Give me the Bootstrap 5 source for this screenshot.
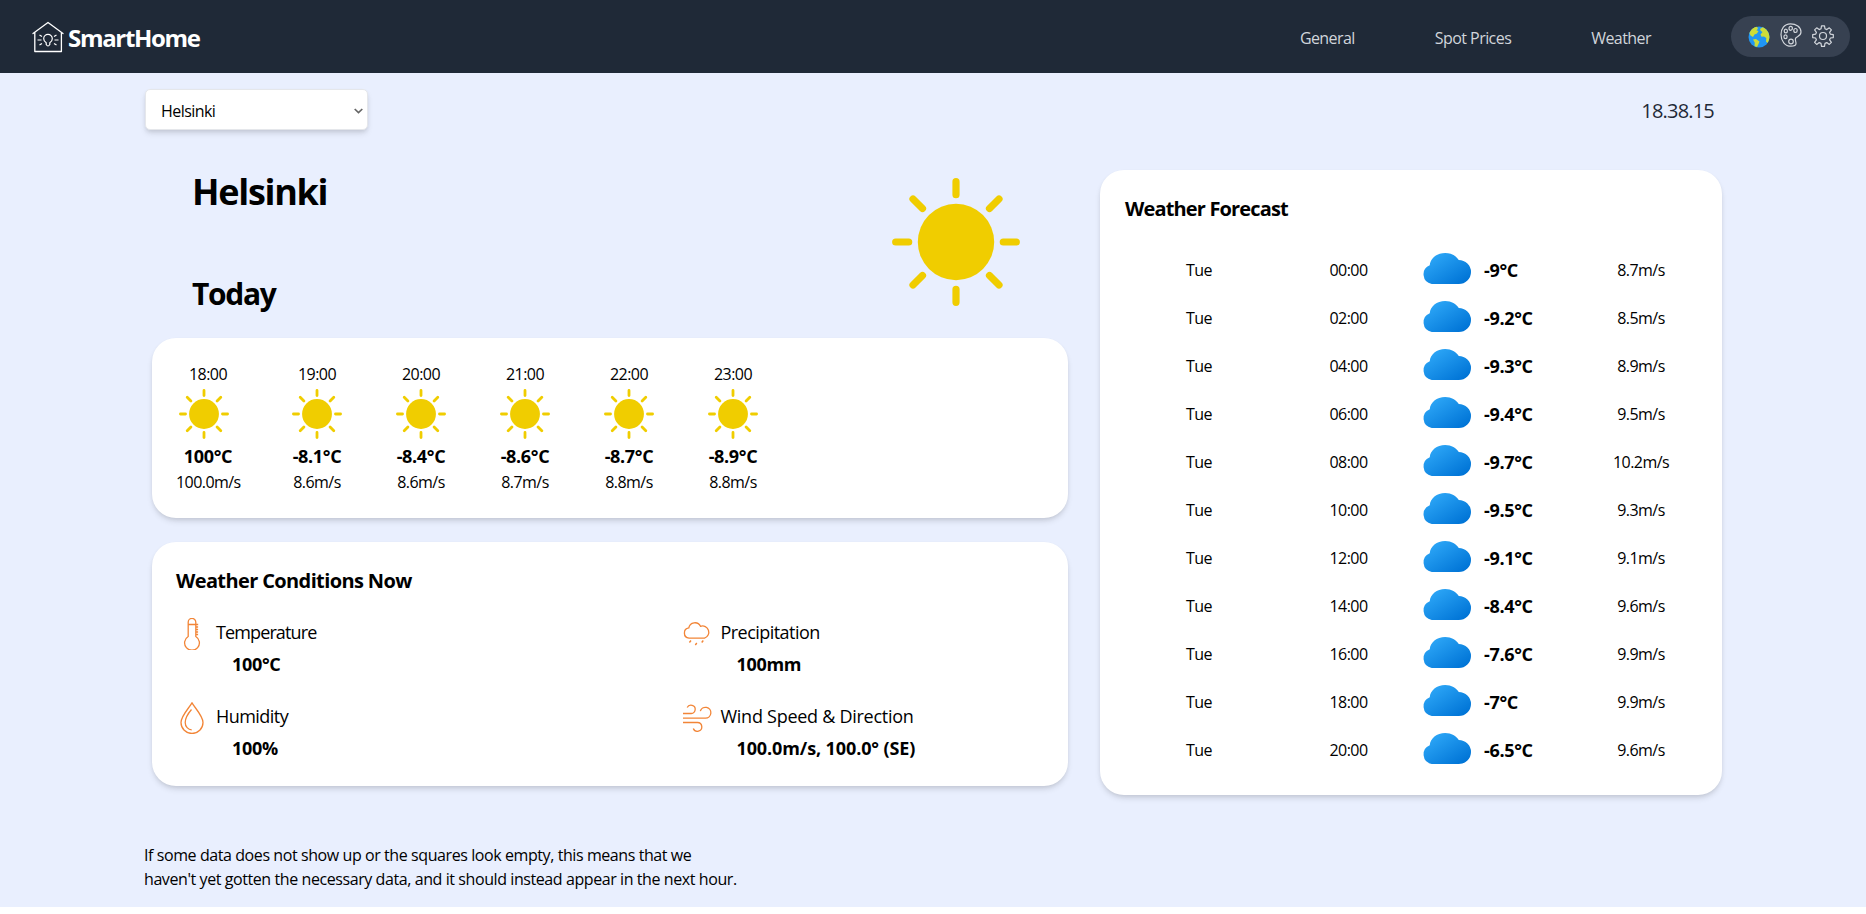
<!DOCTYPE html>
<html lang="en">
<head>
<meta charset="utf-8">
<meta name="viewport" content="width=device-width, initial-scale=1">
<title>SmartHome</title>
<link href="https://cdn.jsdelivr.net/npm/bootstrap@5.3.0/dist/css/bootstrap.min.css" rel="stylesheet">
<style>
  body { font-family: "Segoe UI", "Open Sans", "Noto Sans", sans-serif; font-size: 16px; line-height: 24px; letter-spacing: -.035em; color: #000; background: #fff; overflow-x: hidden; }
  svg { display: block; flex: none; }
  .topbar { height: 73px; background: #1f2937; padding: 0 16px 0 32px; }
  .brand { font-size: 24px; font-weight: 700; letter-spacing: -.055em; color: #fff; gap: 4px; }
  .brand span { padding-top: 2px; }
  .menu { gap: 80px; }
  .menu a { color: #d1d5db; text-decoration: none; padding-top: 2px; }
  .tools { height: 41px; width: 119px; background: #374151; padding: 0 16px 0 17px; }
  .tools .gear { margin-bottom: 2px; }
  .page { background: #e9effe; height: 834px; padding: 16px 144px; }
  .city { width: 223px; height: 41px; margin-left: 1px; padding: 2px 4px 0 15px; border: 1px solid #e5e7eb; border-radius: 5px; background: #fff; box-shadow: 0 4px 6px -1px rgba(0,0,0,.12), 0 2px 4px -1px rgba(0,0,0,.08); }
  .clock { font-size: 20px; color: #1f2937; padding: 3px 8px 0 0; letter-spacing: -.04em; }
  .cols { margin-top: 40px; gap: 32px; padding-left: 8px; }
  .left { width: 916px; }
  .right { width: 622px; height: 625px; }
  .hero { height: 168px; padding: 0 48px 0 40px; }
  .hero h1 { font-size: 36px; line-height: 40px; font-weight: 700; margin: 2px 0 64px; letter-spacing: -.036em; }
  .hero h2 { font-size: 30px; line-height: 36px; font-weight: 700; margin: 0; letter-spacing: -.045em; }
  .panel { background: #fff; border-radius: 24px; padding: 24px; box-shadow: 0 4px 6px -1px rgba(0,0,0,.12), 0 2px 4px -1px rgba(0,0,0,.08); }
  .panel h3 { font-size: 20px; line-height: 28px; font-weight: 700; margin: 0; padding-top: 1px; height: 28px; letter-spacing: -.031em; }
  .right h3 { padding-left: 1px; letter-spacing: -.042em; }
  .hours { display: grid; grid-template-columns: 64px repeat(5, 104px); }
  .hour { text-align: center; white-space: nowrap; }
  .hour + .hour { margin-left: 25px; margin-right: -25px; }
  .hour svg { margin: 3px auto; }
  .hour:first-child svg { margin-left: 3px; }
  .strong { font-size: 18px; line-height: 28px; font-weight: 700; letter-spacing: -.018em; }
  .conds { display: grid; grid-template-columns: 504.5px 1fr; row-gap: 24px; margin-top: 24px; }
  .cond { gap: 8px; }
  .cond .label { font-size: 18px; line-height: 28px; margin-bottom: 4px; letter-spacing: -.03em; }
  .cond:first-child .label { letter-spacing: -.049em; }
  .cond:last-child .label { letter-spacing: -.015em; }
  .cond:last-child .strong { letter-spacing: -.006em; }
  .cond .strong { padding-left: 16px; }
  .cond svg { stroke: #f28537; fill: none; stroke-width: 1.300; }
  .slot { display: grid; grid-template-columns: 150px 149px 161px 114px; height: 48px; align-items: center; text-align: center; }
  .slot .temp { gap: 13px; text-align: left; }
  .slot .temp svg { margin: -3px 0 0 -1px; }
  .note { width: 640px; margin-top: 48px; letter-spacing: -.026em; }
</style>
</head>
<body>
<svg width="0" height="0" class="position-absolute">
  <defs>
    <linearGradient id="sky" x1="0" y1="0" x2="1" y2="1"><stop offset=".1" stop-color="#2ea8f8"/><stop offset=".9" stop-color="#0074d6"/></linearGradient>
    <symbol id="sun" viewBox="0 0 128 128"><circle cx="64" cy="64" r="38.2" fill="#f0cd00"/><path d="M64 3.7v13M64 111.3v13M3.7 64h13M111.3 64h13M21 21l9.5 9.5M97.500 97.500l9.500 9.500M107 21l-9.500 9.500M30.500 97.500L21 107" stroke="#f0cd00" stroke-width="7.2" stroke-linecap="round"/></symbol>
    <symbol id="cloud" viewBox="0 0 48 31" preserveAspectRatio="none"><path fill="url(#sky)" d="M9.500 31A9.800 9.800 0 0 1 7.600 12.300C8 5.500 14.500 0 22.700 0C29 0 33.500 3 36 7A12 12 0 0 1 36 31Z"/></symbol>
  </defs>
</svg>

<header class="topbar d-flex align-items-center justify-content-between">
  <div class="brand d-flex align-items-center">
    <svg width="32" height="32" viewBox="0 0 32 32" fill="none" stroke="#fff" stroke-width="1.300">
      <path d="M1 12.500L16 1.500L31 12.500M2.800 11.500V30.500H29.400V11.500" stroke-linejoin="round" stroke-linecap="round"/>
      <path d="M14.200 23.500v-1.800c-1.500-1-2.500-2-2.500-4a4.300 4.300 0 0 1 8.600 0c0 2-1 3-2.500 4v1.800q-1.800 3-3.600 0zM5.500 19h4M22.500 19h4M7.500 14l2.500 1.500M24.500 14L22 15.500M7.500 24l2.500-1.500M24.500 24L22 22.500" stroke-width="1.200"/>
    </svg>
    <span>SmartHome</span>
  </div>
  <nav class="menu d-flex align-items-center">
    <a href="#">General</a><a href="#">Spot Prices</a><a href="#">Weather</a>
    <div class="tools rounded-pill d-flex align-items-center justify-content-between">
      <svg width="22" height="22" viewBox="0 0 22 22"><circle cx="11" cy="11" r="10.500" fill="#2196f3"/><path fill="#cddc39" d="M1.500 7C3 3.500 6 1 9 .800L10 2.500L8.500 4.500L10.500 5L9 7.500L6.500 8.500L5 11L2.500 9.500ZM12 3L14.500 1.200C18.500 2.500 21.300 6.500 21.400 11C21.300 13.500 20.500 15.500 19.500 17L18 15.500L18.300 12L16 10.500L13.500 10.800L12.500 8.500L14.500 6L12.800 5ZM5 13.500L8 13L11.500 15.500L10.500 18L9 21L6.500 20L6.800 16.800Z"/></svg>
      <svg width="22" height="24" viewBox="0 0 22 24" class="mb-1" fill="none" stroke="#d1d5db" stroke-width="1.200"><path d="M10.500 .8C4 .8 1 6 1 11.500C1 18 5 23.200 11 23.200C14 23.200 16 22.500 16 20.500C16 18.500 15 17.500 15.500 15.500C16 13.500 21 13.500 21 9C21 4 16 .8 10.500 .8Z"/><ellipse cx="10.700" cy="5.300" rx="1.700" ry="2"/><ellipse cx="5.800" cy="8" rx="1.600" ry="1.900"/><ellipse cx="15.500" cy="7.500" rx="1.700" ry="2"/><ellipse cx="5.500" cy="13.700" rx="1.600" ry="1.900"/><circle cx="11" cy="18.500" r="2.300"/></svg>
      <svg width="22" height="22" viewBox="0 0 22 22" class="gear" fill="none" stroke="#d1d5db" stroke-width="1.200" stroke-linejoin="round"><circle cx="11" cy="11" r="3.500"/><path d="M9.500 .8h3l.5 3 1.800.8 2.500-1.800 2.100 2.100-1.800 2.500.8 1.800 2.900.4v3l-2.900.4-.8 1.800 1.800 2.500-2.100 2.100-2.500-1.800-1.800.8-.5 2.900h-3l-.5-2.900-1.800-.8-2.500 1.800-2.100-2.100 1.800-2.500-.8-1.800-2.900-.4v-3l2.900-.4.8-1.800-1.800-2.500 2.100-2.100 2.500 1.800 1.800-.8z"/></svg>
    </div>
  </nav>
</header>

<main class="page">
  <div class="d-flex align-items-center justify-content-between">
    <div class="city d-flex align-items-center justify-content-between"><span>Helsinki</span>
      <svg width="9" height="6" viewBox="0 0 9 6" fill="none" stroke="#666" stroke-width="1.700"><path d="M.700 1L4.500 4.600L8.300 1"/></svg></div>
    <div class="clock">18.38.15</div>
  </div>

  <div class="cols d-flex">
    <section class="left">
      <div class="hero d-flex justify-content-between">
        <div><h1>Helsinki</h1><h2>Today</h2></div>
        <svg width="128" height="128" class="mt-2"><use href="#sun"/></svg>
      </div>
      <div class="panel hours">
        <div class="hour"><div>18:00</div><svg width="50" height="50"><use href="#sun"/></svg><div class="strong">100°C</div><div>100.0m/s</div></div>
        <div class="hour"><div>19:00</div><svg width="50" height="50"><use href="#sun"/></svg><div class="strong">-8.1°C</div><div>8.6m/s</div></div>
        <div class="hour"><div>20:00</div><svg width="50" height="50"><use href="#sun"/></svg><div class="strong">-8.4°C</div><div>8.6m/s</div></div>
        <div class="hour"><div>21:00</div><svg width="50" height="50"><use href="#sun"/></svg><div class="strong">-8.6°C</div><div>8.7m/s</div></div>
        <div class="hour"><div>22:00</div><svg width="50" height="50"><use href="#sun"/></svg><div class="strong">-8.7°C</div><div>8.8m/s</div></div>
        <div class="hour"><div>23:00</div><svg width="50" height="50"><use href="#sun"/></svg><div class="strong">-8.9°C</div><div>8.8m/s</div></div>
      </div>
      <div class="panel mt-4">
        <h3>Weather Conditions Now</h3>
        <div class="conds">
          <div class="cond d-flex">
            <svg width="32" height="32" viewBox="0 0 32 32"><path d="M12.200 18.500V4.200a3.800 3.800 0 0 1 7.600 0V18.500a7.400 7.400 0 1 1-7.600 0zM12.200 6.500h10M19.800 9h2.300M19.800 11.500h2.300M19.800 14h2.300M19.800 16.500h2.300"/></svg>
            <div><div class="label">Temperature</div><div class="strong">100°C</div></div>
          </div>
          <div class="cond d-flex">
            <svg width="32" height="32" viewBox="0 0 32 32"><path d="M8 20.200a5.200 5.200 0 0 1-.2-10.300A6.200 6.200 0 0 1 19.500 8.300A6 6 0 1 1 23.500 20.200Z"/><path d="M10 22.500l-1.600 2M15.800 25l-1.500 2M22.300 22.500l-1.600 2" stroke-width="1.400"/></svg>
            <div><div class="label">Precipitation</div><div class="strong">100mm</div></div>
          </div>
          <div class="cond d-flex">
            <svg width="32" height="32" viewBox="0 0 32 32"><path d="M16 .9C13 6 5 14 5 20.500a11 11 0 0 0 22 0C27 14 19 6 16 .9Z"/><path d="M15.500 7.500C12.500 11 9.200 16 9.200 20.500c0 4 3 7.300 6.500 7.300"/></svg>
            <div><div class="label">Humidity</div><div class="strong">100%</div></div>
          </div>
          <div class="cond d-flex">
            <svg width="32" height="32" viewBox="0 0 32 32"><path d="M2 11.500h8.200a4.200 4.200 0 1 0-4-6M2 16.100H24.500a5.400 5.400 0 1 0-5.200-7M2 20.500H16.500a4.400 4.400 0 1 1-4.200 6"/></svg>
            <div><div class="label">Wind Speed &amp; Direction</div><div class="strong">100.0m/s, 100.0° (SE)</div></div>
          </div>
        </div>
      </div>
    </section>

    <section class="panel right">
      <h3 class="mb-4">Weather Forecast</h3>
      <div class="slot"><span>Tue</span><span>00:00</span><div class="temp strong d-flex align-items-center"><svg width="49" height="31"><use href="#cloud"/></svg>-9°C</div><span>8.7m/s</span></div>
      <div class="slot"><span>Tue</span><span>02:00</span><div class="temp strong d-flex align-items-center"><svg width="49" height="31"><use href="#cloud"/></svg>-9.2°C</div><span>8.5m/s</span></div>
      <div class="slot"><span>Tue</span><span>04:00</span><div class="temp strong d-flex align-items-center"><svg width="49" height="31"><use href="#cloud"/></svg>-9.3°C</div><span>8.9m/s</span></div>
      <div class="slot"><span>Tue</span><span>06:00</span><div class="temp strong d-flex align-items-center"><svg width="49" height="31"><use href="#cloud"/></svg>-9.4°C</div><span>9.5m/s</span></div>
      <div class="slot"><span>Tue</span><span>08:00</span><div class="temp strong d-flex align-items-center"><svg width="49" height="31"><use href="#cloud"/></svg>-9.7°C</div><span>10.2m/s</span></div>
      <div class="slot"><span>Tue</span><span>10:00</span><div class="temp strong d-flex align-items-center"><svg width="49" height="31"><use href="#cloud"/></svg>-9.5°C</div><span>9.3m/s</span></div>
      <div class="slot"><span>Tue</span><span>12:00</span><div class="temp strong d-flex align-items-center"><svg width="49" height="31"><use href="#cloud"/></svg>-9.1°C</div><span>9.1m/s</span></div>
      <div class="slot"><span>Tue</span><span>14:00</span><div class="temp strong d-flex align-items-center"><svg width="49" height="31"><use href="#cloud"/></svg>-8.4°C</div><span>9.6m/s</span></div>
      <div class="slot"><span>Tue</span><span>16:00</span><div class="temp strong d-flex align-items-center"><svg width="49" height="31"><use href="#cloud"/></svg>-7.6°C</div><span>9.9m/s</span></div>
      <div class="slot"><span>Tue</span><span>18:00</span><div class="temp strong d-flex align-items-center"><svg width="49" height="31"><use href="#cloud"/></svg>-7°C</div><span>9.9m/s</span></div>
      <div class="slot"><span>Tue</span><span>20:00</span><div class="temp strong d-flex align-items-center"><svg width="49" height="31"><use href="#cloud"/></svg>-6.5°C</div><span>9.6m/s</span></div>
    </section>
  </div>

  <p class="note mb-0">If some data does not show up or the squares look empty, this means that we<br>haven't yet gotten the necessary data, and it should instead appear in the next hour.</p>
</main>
<script src="https://cdn.jsdelivr.net/npm/bootstrap@5.3.0/dist/js/bootstrap.bundle.min.js"></script>
</body>
</html>
